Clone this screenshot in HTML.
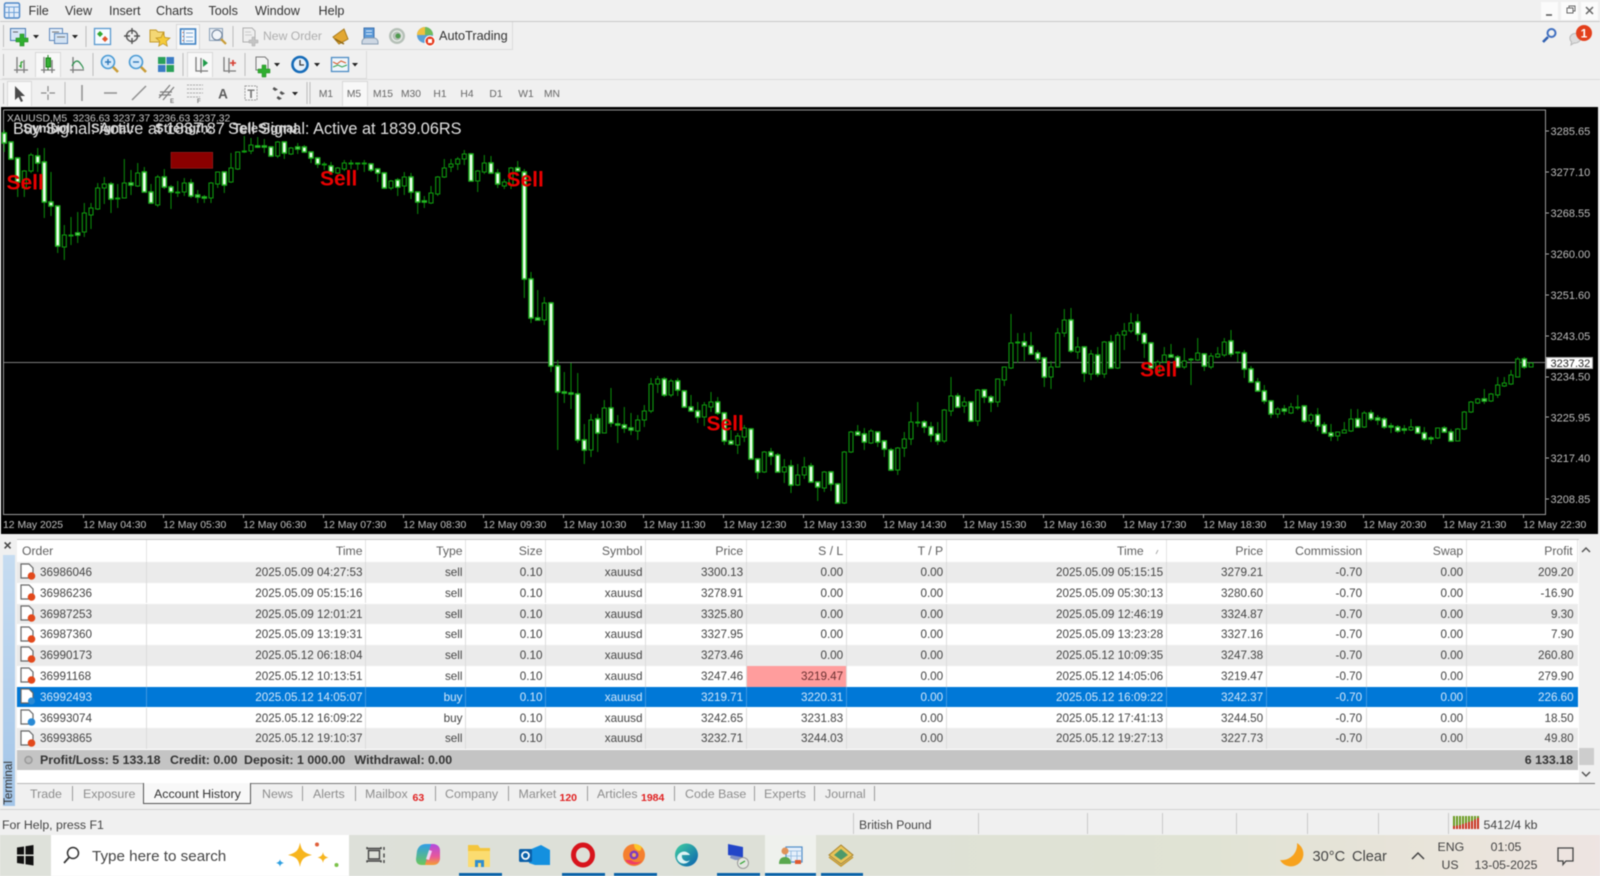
<!DOCTYPE html>
<html><head><meta charset="utf-8"><title>MetaTrader</title>
<style>
html,body{margin:0;padding:0;background:#f0f0f0}
#w{position:relative;width:1600px;height:876px;overflow:hidden;background:#f0f0f0;font-family:"Liberation Sans",Arial,sans-serif;filter:blur(.6px)}
.b{position:absolute}
.t{position:absolute;white-space:nowrap;line-height:0}
.m{font-size:12.6px;color:#333;top:10.5px}
.r{position:absolute;left:17px;width:1560.7px;height:20.8px;display:flex;line-height:22.4px;font-size:11.7px;color:#444;background:#fff;overflow:hidden}
.r.o{background:#ebebeb}
.r.s{background:#0078d7;color:#d2e6f9}
.r div{box-sizing:border-box;text-align:right;padding-right:2.5px;border-right:1px solid #dcdcdc;white-space:nowrap;flex:none}
.r.s div{border-right-color:#3f97e0}
.r div:nth-child(1){width:130px;text-align:left;padding-left:23px}
.r div:nth-child(2){width:219px}.r div:nth-child(3){width:100px}.r div:nth-child(4){width:80px}
.r div:nth-child(5){width:100px}.r div:nth-child(6){width:100.7px}.r div:nth-child(7){width:100px}
.r div:nth-child(8){width:100px}.r div:nth-child(9){width:220px}.r div:nth-child(10){width:100px}
.r div:nth-child(11){width:100px;padding-right:3.5px}.r div:nth-child(12){width:100px}.r div:nth-child(13){width:111px;border-right:0;padding-right:4px}
.r.h{height:22px;line-height:23.6px;font-size:12.2px;color:#5f5f5f}
.r.h div{border-right:1px solid #e4e4e4}
.r.h div:nth-child(1){padding-left:5px}
.r.h div:nth-child(9){padding-right:22px}
.tab{font-size:12.4px;color:#8d8d8d;top:794px}
.sep{position:absolute;width:1px;background:#9a9a9a;top:786px;height:15px}
.bd{color:#333;font-weight:bold;font-size:12.4px;top:760px}
.ss{position:absolute;width:1px;background:#c8c8c8;top:813px;height:21px}
.c{color:#e02020;font-weight:bold;font-size:10.5px;top:798px}
</style></head><body><div id="w">

<!-- menu -->
<div class="b" style="left:0;top:21px;width:1600px;height:1px;background:#c9c9c9"></div>
<span class="t m" style="left:28.5px">File</span><span class="t m" style="left:65px">View</span><span class="t m" style="left:109px">Insert</span><span class="t m" style="left:156px">Charts</span><span class="t m" style="left:208.5px">Tools</span><span class="t m" style="left:255px">Window</span><span class="t m" style="left:318.5px">Help</span>

<!-- toolbars -->
<div class="b" style="left:2px;top:22px;width:510px;height:27px;border:1px solid #dcdcdc;border-left:0;border-top:0"></div>
<div class="b" style="left:2px;top:51px;width:364px;height:27px;border:1px solid #dcdcdc;border-left:0;border-top:0"></div>
<div class="b" style="left:0;top:79px;width:1600px;height:1px;background:#dcdcdc"></div>
<div class="b" style="left:176px;top:24px;width:24px;height:25px;background:#f8f8f8;border:1px solid #d8d8d8;border-bottom:0;box-sizing:border-box"></div>
<div class="b" style="left:35px;top:52px;width:26px;height:25px;background:#f8f8f8;border:1px solid #d8d8d8;border-bottom:0;box-sizing:border-box"></div>
<div class="b" style="left:187px;top:52px;width:26px;height:25px;background:#f8f8f8;border:1px solid #d8d8d8;border-bottom:0;box-sizing:border-box"></div>
<div class="b" style="left:7px;top:81px;width:25px;height:25px;background:#f8f8f8;border:1px solid #d8d8d8;border-bottom:0;box-sizing:border-box"></div>
<div class="b" style="left:342px;top:81px;width:26px;height:25px;background:#f8f8f8;border:1px solid #d8d8d8;border-bottom:0;box-sizing:border-box"></div>
<span class="t" style="left:263px;top:36px;font-size:12.2px;color:#aeaeae">New Order</span>
<span class="t" style="left:439px;top:36px;font-size:12.7px;color:#333">AutoTrading</span>

<!-- window buttons -->
<div class="b" style="left:1541px;top:2px;width:17px;height:18px;background:#fbfbfb"></div>
<div class="b" style="left:1561px;top:2px;width:17px;height:18px;background:#fbfbfb"></div>
<div class="b" style="left:1581px;top:2px;width:17px;height:18px;background:#fbfbfb"></div>

<!-- table -->
<div class="b" style="left:17px;top:539px;width:1562px;height:244px;background:#fff;border-top:1px solid #c8c8c8;box-sizing:border-box"></div>
<div class="r h" style="top:540px"><div>Order</div><div>Time</div><div>Type</div><div>Size</div><div>Symbol</div><div>Price</div><div>S / L</div><div>T / P</div><div>Time</div><div>Price</div><div>Commission</div><div>Swap</div><div>Profit</div></div>
<div class="r o" style="top:561.9px"><div>36986046</div><div>2025.05.09 04:27:53</div><div>sell</div><div>0.10</div><div>xauusd</div><div>3300.13</div><div>0.00</div><div>0.00</div><div>2025.05.09 05:15:15</div><div>3279.21</div><div>-0.70</div><div>0.00</div><div>209.20</div></div>
<div class="r" style="top:582.7px"><div>36986236</div><div>2025.05.09 05:15:16</div><div>sell</div><div>0.10</div><div>xauusd</div><div>3278.91</div><div>0.00</div><div>0.00</div><div>2025.05.09 05:30:13</div><div>3280.60</div><div>-0.70</div><div>0.00</div><div>-16.90</div></div>
<div class="r o" style="top:603.5px"><div>36987253</div><div>2025.05.09 12:01:21</div><div>sell</div><div>0.10</div><div>xauusd</div><div>3325.80</div><div>0.00</div><div>0.00</div><div>2025.05.09 12:46:19</div><div>3324.87</div><div>-0.70</div><div>0.00</div><div>9.30</div></div>
<div class="r" style="top:624.3px"><div>36987360</div><div>2025.05.09 13:19:31</div><div>sell</div><div>0.10</div><div>xauusd</div><div>3327.95</div><div>0.00</div><div>0.00</div><div>2025.05.09 13:23:28</div><div>3327.16</div><div>-0.70</div><div>0.00</div><div>7.90</div></div>
<div class="r o" style="top:645.1px"><div>36990173</div><div>2025.05.12 06:18:04</div><div>sell</div><div>0.10</div><div>xauusd</div><div>3273.46</div><div>0.00</div><div>0.00</div><div>2025.05.12 10:09:35</div><div>3247.38</div><div>-0.70</div><div>0.00</div><div>260.80</div></div>
<div class="r" style="top:665.9px"><div>36991168</div><div>2025.05.12 10:13:51</div><div>sell</div><div>0.10</div><div>xauusd</div><div>3247.46</div><div style="background:#ff9d9d;color:#6a3030">3219.47</div><div>0.00</div><div>2025.05.12 14:05:06</div><div>3219.47</div><div>-0.70</div><div>0.00</div><div>279.90</div></div>
<div class="r s" style="top:686.7px"><div>36992493</div><div>2025.05.12 14:05:07</div><div>buy</div><div>0.10</div><div>xauusd</div><div>3219.71</div><div>3220.31</div><div>0.00</div><div>2025.05.12 16:09:22</div><div>3242.37</div><div>-0.70</div><div>0.00</div><div>226.60</div></div>
<div class="r" style="top:707.5px"><div>36993074</div><div>2025.05.12 16:09:22</div><div>buy</div><div>0.10</div><div>xauusd</div><div>3242.65</div><div>3231.83</div><div>0.00</div><div>2025.05.12 17:41:13</div><div>3244.50</div><div>-0.70</div><div>0.00</div><div>18.50</div></div>
<div class="r o" style="top:728.3px"><div>36993865</div><div>2025.05.12 19:10:37</div><div>sell</div><div>0.10</div><div>xauusd</div><div>3232.71</div><div>3244.03</div><div>0.00</div><div>2025.05.12 19:27:13</div><div>3227.73</div><div>-0.70</div><div>0.00</div><div>49.80</div></div>
<div class="b" style="left:17px;top:749.7px;width:1561px;height:20.3px;background:#c4c4c4"></div>
<span class="t bd" style="left:40px">Profit/Loss: 5 133.18</span><span class="t bd" style="left:170px">Credit: 0.00</span><span class="t bd" style="left:244px">Deposit: 1 000.00</span><span class="t bd" style="left:354.5px">Withdrawal: 0.00</span>
<span class="t bd" style="right:27px">6 133.18</span>

<!-- left strip -->
<div class="b" style="left:3px;top:555px;width:12px;height:251px;background:linear-gradient(#c6dcf1,#a3c5e8)"></div>
<span class="t" style="left:3.5px;top:545px;font-size:14px;font-weight:bold;color:#444">×</span>
<span class="t" style="left:9px;top:782.5px;font-size:11.6px;color:#333;transform:translateX(-50%) rotate(-90deg)">Terminal</span>

<!-- scrollbar -->
<div class="b" style="left:1579px;top:748px;width:15px;height:17px;background:#cdcdcd"></div>

<!-- tabs -->
<div class="b" style="left:17px;top:783px;width:126px;height:1px;background:#b8b8b8"></div>
<div class="b" style="left:250px;top:783px;width:1345px;height:1px;background:#777"></div>
<div class="b" style="left:143px;top:783px;width:108px;height:21px;background:#f8f8f8;border:1.5px solid #555;border-top:0;box-sizing:border-box"></div>
<span class="t tab" style="left:30px">Trade</span><div class="sep" style="left:72px"></div>
<span class="t tab" style="left:83px">Exposure</span>
<span class="t tab" style="left:154px;color:#333">Account History</span>
<span class="t tab" style="left:262px">News</span><div class="sep" style="left:302px"></div>
<span class="t tab" style="left:313px">Alerts</span><div class="sep" style="left:355px"></div>
<span class="t tab" style="left:365px">Mailbox</span><span class="t c" style="left:412.5px">63</span><div class="sep" style="left:435px"></div>
<span class="t tab" style="left:445px">Company</span><div class="sep" style="left:508px"></div>
<span class="t tab" style="left:518.5px">Market</span><span class="t c" style="left:559.5px">120</span><div class="sep" style="left:587px"></div>
<span class="t tab" style="left:597px">Articles</span><span class="t c" style="left:641px">1984</span><div class="sep" style="left:674px"></div>
<span class="t tab" style="left:685px">Code Base</span><div class="sep" style="left:754px"></div>
<span class="t tab" style="left:764px">Experts</span><div class="sep" style="left:814px"></div>
<span class="t tab" style="left:825px">Journal</span><div class="sep" style="left:874px"></div>
<div class="b" style="left:0;top:808.5px;width:1600px;height:1px;background:#d2d2d2"></div>

<!-- status -->
<span class="t" style="left:2px;top:825px;font-size:12.3px;color:#444">For Help, press F1</span>
<div class="ss" style="left:853px"></div><div class="ss" style="left:978px"></div><div class="ss" style="left:1087px"></div><div class="ss" style="left:1162px"></div><div class="ss" style="left:1236px"></div><div class="ss" style="left:1307px"></div><div class="ss" style="left:1378px"></div><div class="ss" style="left:1448px"></div>
<span class="t" style="left:859px;top:825px;font-size:12.2px;color:#444">British Pound</span>
<span class="t" style="left:1483.5px;top:825px;font-size:12.3px;color:#444">5412/4 kb</span>

<!-- taskbar -->
<div class="b" style="left:0;top:835px;width:1600px;height:41px;background:linear-gradient(90deg,#dee1da 0,#dde0d8 40%,#e0e3d4 75%,#eae4db 92%,#eee4e2 100%)"></div>
<div class="b" style="left:51px;top:835px;width:298px;height:41px;background:#fff"></div>
<div class="b" style="left:765px;top:835px;width:51px;height:41px;background:#eff1ed"></div>
<div class="b" style="left:459px;top:873px;width:43px;height:3px;background:#0a63a8"></div>
<div class="b" style="left:562px;top:873px;width:43px;height:3px;background:#0a63a8"></div>
<div class="b" style="left:614px;top:873px;width:43px;height:3px;background:#0a63a8"></div>
<div class="b" style="left:717px;top:873px;width:43px;height:3px;background:#0a63a8"></div>
<div class="b" style="left:765px;top:873px;width:51px;height:3px;background:#0a63a8"></div>
<div class="b" style="left:821px;top:873px;width:42px;height:3px;background:#0a63a8"></div>
<span class="t" style="left:92px;top:857px;font-size:15.2px;color:#444">Type here to search</span>
<span class="t" style="left:1312.5px;top:857px;font-size:14.6px;color:#444">30°C</span>
<span class="t" style="left:1352px;top:857px;font-size:14.6px;color:#444">Clear</span>
<span class="t" style="left:1437.5px;top:846.5px;font-size:12.3px;color:#444">ENG</span>
<span class="t" style="left:1441.5px;top:865px;font-size:12.3px;color:#444">US</span>
<span class="t" style="left:1506px;top:846.5px;font-size:12.3px;color:#444;transform:translateX(-50%)">01:05</span>
<span class="t" style="left:1506px;top:865px;font-size:12.3px;color:#444;transform:translateX(-50%)">13-05-2025</span>

<!-- graphics -->
<svg class="b" style="left:0;top:0" width="1600" height="876" viewBox="0 0 1600 876" xmlns="http://www.w3.org/2000/svg" font-family="Liberation Sans, Arial, sans-serif">
<defs>
<g id="d"><path d="M21 -8H29L33 -4V6H21Z" fill="#fff" stroke="#666" stroke-width="1.2"/></g>
<linearGradient id="cl" x1="0" y1="0" x2="0" y2="1"><stop offset="0" stop-color="#2f9ee8"/><stop offset="1" stop-color="#6cc85a"/></linearGradient>
<linearGradient id="cr" x1="0" y1="0" x2="0" y2="1"><stop offset="0" stop-color="#b04ae0"/><stop offset=".6" stop-color="#e8589a"/><stop offset="1" stop-color="#f5a030"/></linearGradient>
<linearGradient id="ed" x1="0" y1="0" x2="1" y2="1"><stop offset="0" stop-color="#3fd0a0"/><stop offset="1" stop-color="#0a5fb0"/></linearGradient>
</defs>

<!-- app icon -->
<rect x="4.500" y="3" width="15" height="15" rx="1.500" fill="#e4eefa" stroke="#4d86c6" stroke-width="1.400"/><path d="M4.500 7H19.500M9 7V18M14 7V18M4.500 12.500H19.500" stroke="#6c9fd6" stroke-width="1"/>

<!-- window glyphs -->
<path d="M1546 15H1552" stroke="#555" stroke-width="1.500"/><path d="M1567 8H1573V13H1567ZM1569 8V6H1575V11H1573" fill="none" stroke="#666"/><path d="M1586 7L1593 14M1593 7L1586 14" stroke="#666" stroke-width="1.500"/>
<!-- search and badge -->
<circle cx="1551.500" cy="33" r="4" fill="none" stroke="#3f6fc0" stroke-width="2"/><path d="M1548 37L1543 42" stroke="#2f5fb0" stroke-width="2.600"/>
<path d="M1570 37a6 6 0 0 1 11 0a6 6 0 0 1-7 6l-3 2l.5-3a6 6 0 0 1-1.500-5z" fill="#ddd" stroke="#b8b8b8"/>
<circle cx="1584" cy="33" r="8" fill="#e33f1b"/><text x="1584" y="37.500" text-anchor="middle" font-size="12" font-weight="bold" fill="#fff">1</text>

<!-- toolbar grips and dividers -->
<path d="M3.500 25V47M3.500 54V76M3.500 83V104M86 26V47M233 26V47M93 53V76M183 53V76M245 53V76M65 82V104M307 82V104M310 82V104" stroke="#bdbdbd" fill="none"/>

<!-- toolbar 1 -->
<rect x="10.500" y="28.500" width="15" height="12" fill="#d5e4f5" stroke="#4b7cb4"/><path d="M13 32H18" stroke="#666"/><path d="M20 34h4v4h4v4h-4v4h-4v-4h-4v-4h4z" fill="#2fae2f" stroke="#1d861d" stroke-width=".6"/>
<path d="M33 35h6l-3 3.500z" fill="#222"/>
<rect x="49.500" y="28.500" width="13" height="12" fill="#e3edf8" stroke="#5d88bb"/><rect x="54.500" y="33.500" width="13" height="10" fill="#d2e2f3" stroke="#5d88bb"/><path d="M52 32H59M57 37H65" stroke="#777"/>
<path d="M72 35h6l-3 3.500z" fill="#222"/>
<rect x="94.500" y="28.500" width="16" height="16" fill="#f7fbff" stroke="#5a9ad0" stroke-width="1.300"/><path d="M100 31l3 3-3 3-3-3z" fill="#2fa82f"/><path d="M105 36l3 3-3 3-3-3z" fill="#e2562a"/>
<circle cx="132" cy="36" r="5.500" fill="none" stroke="#5e5e5e" stroke-width="1.500"/><path d="M132 28V34M132 38V44M124 36H130M134 36H140" stroke="#555" stroke-width="1.400"/>
<path d="M150 30h6l2 2h6v10h-14z" fill="#f4d774" stroke="#c59b2e"/><path d="M163 33l2 4.500 5 .5-3.700 3.200 1 5-4.300-2.600-4.300 2.600 1-5-3.700-3.200 5-.5z" fill="#f5cb3a" stroke="#b98e1f" stroke-width=".7"/>
<rect x="180.500" y="29" width="15" height="15" fill="#f5f9fd" stroke="#3f82c4" stroke-width="1.600"/><path d="M184 29V44M186 33H193M186 37H193M186 41H193" stroke="#7ca8d4"/><path d="M183 32v1M183 36v1M183 40v1" stroke="#d04a20"/>
<rect x="209.500" y="28.500" width="13" height="12" fill="#e8eef5" stroke="#8aa0b8"/><circle cx="217" cy="35" r="5" fill="#f1f5f9" stroke="#6c8099"/><path d="M221 39l5 5" stroke="#c89b35" stroke-width="2.200"/>
<path d="M243 28h9l3 3v11h-12z" fill="#eee" stroke="#b0b0b0"/><path d="M245 32h6M245 35h7" stroke="#ccc"/><path d="M252 37h3v3h3v3h-3v3h-3v-3h-3v-3h3z" fill="#c4c4c4" stroke="#aaa" stroke-width=".5"/>
<path d="M333 37l11-8 4 10-9 5z" fill="#e2a732" stroke="#a87a1c"/><path d="M335 39l9 5" stroke="#8f6715" stroke-width="1.500"/>
<path d="M364 28h10v10h-10z" fill="#5c9ad8" stroke="#3c70ae"/><path d="M366 31h6M366 34h6" stroke="#dceaf8"/><path d="M362 42a4 4 0 0 1 4-4h8a4 4 0 0 1 4 4v2h-16z" fill="#cdd7e3" stroke="#8a9fb5"/>
<circle cx="397" cy="36" r="8" fill="#b6c0b8"/><circle cx="397" cy="36" r="5" fill="none" stroke="#eef3ee"/><circle cx="398" cy="36" r="2.500" fill="#4e9a4e"/>
<circle cx="425" cy="35" r="8" fill="#5aa0d8"/><path d="M417 35a8 8 0 0 1 8-8v8z" fill="#f0c040"/><path d="M425 27a8 8 0 0 1 8 8h-8z" fill="#6fbb5a"/><circle cx="430" cy="41" r="5" fill="#e53b1e" stroke="#fff"/><rect x="428" y="39" width="4" height="4" fill="#fff"/>

<!-- toolbar 2 -->
<path d="M14 70H28M17 57V73M24 60V73" stroke="#7b7b7b" stroke-width="1.300" fill="none"/><path d="M21 62v6M19 66h2M21 62h2" stroke="#2aa02a" stroke-width="1.300"/>
<path d="M41 70H55M44 57V73M52 60V73" stroke="#7b7b7b" stroke-width="1.300" fill="none"/><rect x="46" y="58" width="4.500" height="9" fill="#35b035" stroke="#1a7f1a"/><path d="M48 55v3M48 67v3" stroke="#1a7f1a"/>
<path d="M70 70H84M73 57V73" stroke="#7b7b7b" stroke-width="1.300" fill="none"/><path d="M72 66q4-8 8-3t3 6" stroke="#2e8f4e" stroke-width="1.300" fill="none"/>
<circle cx="108" cy="62" r="6.500" fill="#d7eafa" stroke="#4a9ad4" stroke-width="1.600"/><path d="M105 62h6M108 59v6" stroke="#2e78b8" stroke-width="1.400"/><path d="M113 67l5 5" stroke="#c89b35" stroke-width="2.600"/>
<circle cx="136" cy="62" r="6.500" fill="#d7eafa" stroke="#4a9ad4" stroke-width="1.600"/><path d="M133 62h6" stroke="#2e78b8" stroke-width="1.400"/><path d="M141 67l5 5" stroke="#c89b35" stroke-width="2.600"/>
<rect x="158" y="57" width="7.500" height="7" fill="#2aa05a"/><rect x="166.500" y="57" width="7.500" height="7" fill="#3a7cc4"/><rect x="158" y="65" width="7.500" height="7" fill="#3a7cc4"/><rect x="166.500" y="65" width="7.500" height="7" fill="#2aa05a"/>
<path d="M196 57V71H208M201 73V58" stroke="#7b7b7b" stroke-width="1.300" fill="none"/><path d="M203 59l5 4-5 4z" fill="#1f9a4a"/>
<path d="M224 57V71H236M229 73V58" stroke="#7b7b7b" stroke-width="1.300" fill="none"/><path d="M233 60v6M230 63h6" stroke="#d63d30" stroke-width="1.600"/>
<path d="M256 57h9l3 3v10h-12z" fill="#f3f3f3" stroke="#787878"/><path d="M262 65h4v4h4v4h-4v4h-4v-4h-4v-4h4z" fill="#2fae2f" stroke="#1d861d" stroke-width=".5"/><path d="M274 63h6l-3 3.500z" fill="#222"/>
<circle cx="300" cy="64.500" r="7.500" fill="#e6f1fb" stroke="#156bb8" stroke-width="2.600"/><path d="M300 60v5h4" stroke="#3b3b3b" stroke-width="1.300" fill="none"/><path d="M314 63h6l-3 3.500z" fill="#222"/>
<rect x="331.500" y="57.500" width="17" height="14" fill="#eef5fb" stroke="#4c8cc4" stroke-width="1.300"/><path d="M333 62l4 2 4-3 5 2" stroke="#d85a2a" fill="none"/><path d="M333 67l5-2 4 2 5-2" stroke="#2fa24f" fill="none"/><path d="M352 63h6l-3 3.500z" fill="#222"/>

<!-- toolbar 3 -->
<path d="M15 86V100l3.500-3 2.500 5 2-1-2.500-5H25z" fill="#4a4a4a"/>
<path d="M48 86V91.500M48 94.500V100M41 93H46.500M49.500 93H55" stroke="#8a8a8a" stroke-width="1.200"/>
<path d="M82 85V101" stroke="#909090" stroke-width="1.500"/>
<path d="M104 93H117" stroke="#909090" stroke-width="1.500"/>
<path d="M132 100L146 86" stroke="#909090" stroke-width="1.500"/>
<path d="M159 98L170 85M163 100L174 87M160 92h12M159 95h12" stroke="#7d7d7d" stroke-width="1.200" fill="none"/><text x="170" y="103" font-size="6" font-weight="bold" fill="#777">E</text>
<path d="M187 85H203M187 89H203M187 93H203M187 97H200" stroke="#a8a8a8" stroke-dasharray="2 1" fill="none"/><text x="197" y="103" font-size="6" font-weight="bold" fill="#777">F</text>
<text x="223" y="98.500" text-anchor="middle" font-size="13.500" font-weight="bold" fill="#5c5c5c">A</text>
<rect x="245" y="86" width="12" height="14" fill="#f6f6f6" stroke="#999" stroke-dasharray="2 1"/><text x="251" y="98" text-anchor="middle" font-size="12" font-weight="bold" fill="#777">T</text>
<path d="M274 87l4 2.500-3 1.500-2.500-2zM281 91l4 2.500-3 1.500-2.500-2zM278 96l4 2.500-3 1.500-2.500-2z" fill="#555"/><path d="M292 92h6l-3 3.500z" fill="#222"/>
<g font-size="10.300" fill="#666" text-anchor="middle"><text x="326" y="97">M1</text><text x="354" y="97">M5</text><text x="383" y="97">M15</text><text x="411" y="97">M30</text><text x="440" y="97">H1</text><text x="467" y="97">H4</text><text x="496" y="97">D1</text><text x="526" y="97">W1</text><text x="552" y="97">MN</text></g>

<!-- chart -->
<rect x="1" y="107" width="1597" height="427" fill="#000"/>
<path d="M3.500 110V514.500H1545.500V110H3.500" fill="none" stroke="#9a9a9a"/>
<path d="M4 362.500H1545" stroke="#7c7c7c"/>
<path fill="none" stroke="#0a8f0a" stroke-width="1" d="M4.300 130V152M11 142V160M17.700 157V197M24.300 170V197M31 153V173M37.700 148V172M44.300 148V218M51 172V216M57.700 206V253M64.300 225V260M71 217V245M77.700 212V243M84.300 203V237M91 203V229M97.700 183V210M104.300 177V204M111 182V213M117.700 184V208M124.300 159V198M131 170V195M137.700 163V187M144.300 167V192M151 184V204M157.700 175V207M164.300 169V189M171 185V209M177.700 181V197M184.300 178V196M191 179V198M197.700 190V203M204.300 195V203M211 182V203M217.700 172V188M224.300 172V193M231 153V183M237.700 152V170M244.300 136V153M251 138V154M257.700 137V148M264.300 139V153M271 146V157M277.700 141V158M284.300 142V159M291 147V155M297.700 143V154M304.300 145V153M311 152V163M317.700 157V168M324.300 162V170M331 162V173M337.700 167V174M344.300 160V171M351 160V169M357.700 163V170M364.300 160V172M371 163V172M377.700 168V182M384.300 172V189M391 180V190M397.700 178V196M404.300 172V195M411 173V199M417.700 192V214M424.300 196V208M431 186V204M437.700 176V196M444.300 159V178M451 159V172M457.700 157V170M464.300 150V165M471 153V181M477.700 170V192M484.300 155V174M491 156V174M497.700 169V188M504.300 179V189M511 167V189M517.700 161V172M524.300 169V298M531 272V323M537.700 290V320M544.300 297V325M551 302V372M557.700 360V450M564.300 372V403M571 363V409M577.700 373V443M584.300 424V464M591 414V457M597.700 414V452M604.300 400V433M611 388V427M617.700 415V443M624.300 407V433M631 413V435M637.700 415V440M644.300 405V427M651 378V413M657.700 376V393M664.300 377V397M671 379V397M677.700 378V396M684.300 390V408M691 395V412M697.700 402V423M704.300 402V426M711 392V412M717.700 397V415M724.300 412V445M731 430V445M737.700 433V454M744.300 425V442M751 428V459M757.700 458V479M764.300 451V473M771 448V465M777.700 453V472M784.300 459V483M791 460V493M797.700 464V486M804.300 457V479M811 463V483M817.700 482V501M824.300 471V492M831 471V491M837.700 483V504M844.300 451V504M851 431V453M857.700 425V435M864.300 428V450M871 429V444M877.700 432V447M884.300 440V457M891 448V471M897.700 447V475M904.300 432V457M911 412V445M917.700 402V427M924.300 420V433M931 422V442M937.700 422V445M944.300 409V443M951 377V416M957.700 393V408M964.300 397V413M971 402V422M977.700 389V426M984.300 389V403M991 395V412M997.700 379V407M1004.300 367V386M1011 314V369M1017.700 333V363M1024.300 333V361M1031 332V355M1037.700 350V363M1044.300 357V387M1051 361V389M1057.700 328V367M1064.300 309V337M1071 308V353M1077.700 337V359M1084.300 346V382M1091 350V380M1097.700 347V377M1104.300 341V378M1111 335V369M1117.700 332V369M1124.300 323V350M1131 313V333M1137.700 314V341M1144.300 332V358M1151 342V370M1157.700 360V375M1164.300 347V363M1171 344V357M1177.700 355V368M1184.300 348V369M1191 358V385M1197.700 338V361M1204.300 353V371M1211 353V369M1217.700 347V358M1224.300 338V357M1231 330V357M1237.700 352V362M1244.300 350V378M1251 366V383M1257.700 378V392M1264.300 385V404M1271 400V418M1277.700 407V418M1284.300 405V415M1291 403V414M1297.700 395V410M1304.300 405V423M1311 413V424M1317.700 408V431M1324.300 422V434M1331 424V441M1337.700 432V441M1344.300 422V433M1351 409V432M1357.700 409V428M1364.300 411V428M1371 410V421M1377.700 415V425M1384.300 417V429M1391 423V433M1397.700 425V433M1404.300 425V434M1411 419V431M1417.700 426V434M1424.300 427V441M1431 436V444M1437.700 428V439M1444.300 426V433M1451 429V442M1457.700 428V441M1464.300 411V430M1471 401V413M1477.700 398V404M1484.300 389V404M1491 393V402M1497.700 377V398M1504.300 377V387M1511 370V385M1517.700 357V377M1524.300 357V369M1531 363V367"/>
<path fill="#000" stroke="#0f9c0f" stroke-width="1.100" d="M24.300 171h2V188h-4V171zM31 155h2V171h-4V155zM64.300 235h2V247h-4V235zM71 235h2V236h-4V235zM84.300 213h2V232h-4V213zM91 208h2V215h-4V208zM97.700 188h2V209h-4V188zM104.300 184h2V188h-4V184zM117.700 198h2V199h-4V198zM124.300 183h2V198h-4V183zM137.700 173h2V186h-4V173zM157.700 177h2V205h-4V177zM177.700 192h2V193h-4V192zM184.300 183h2V192h-4V183zM211 183h2V198h-4V183zM217.700 172h2V184h-4V172zM231 168h2V182h-4V168zM237.700 152h2V169h-4V152zM244.300 151h2V152h-4V151zM251 145h2V151h-4V145zM277.700 142h2V156h-4V142zM291 148h2V154h-4V148zM324.300 164h2V165h-4V164zM337.700 168h2V173h-4V168zM344.300 163h2V169h-4V163zM351 163h2V164h-4V163zM357.700 163h2V164h-4V163zM364.300 163h2V164h-4V163zM391 181h2V188h-4V181zM404.300 177h2V186h-4V177zM431 193h2V203h-4V193zM437.700 177h2V194h-4V177zM444.300 168h2V177h-4V168zM451 164h2V167h-4V164zM457.700 159h2V164h-4V159zM464.300 154h2V159h-4V154zM477.700 171h2V181h-4V171zM484.300 163h2V172h-4V163zM504.300 182h2V186h-4V182zM511 168h2V185h-4V168zM544.300 303h2V320h-4V303zM591 420h2V450h-4V420zM604.300 408h2V433h-4V408zM637.700 420h2V431h-4V420zM644.300 411h2V420h-4V411zM651 384h2V411h-4V384zM657.700 379h2V384h-4V379zM671 381h2V395h-4V381zM704.300 405h2V417h-4V405zM711 402h2V407h-4V402zM737.700 436h2V445h-4V436zM744.300 428h2V437h-4V428zM764.300 452h2V472h-4V452zM784.300 467h2V472h-4V467zM797.700 475h2V485h-4V475zM804.300 467h2V475h-4V467zM824.300 472h2V488h-4V472zM844.300 452h2V503h-4V452zM851 432h2V452h-4V432zM871 431h2V443h-4V431zM897.700 448h2V470h-4V448zM904.300 439h2V448h-4V439zM911 422h2V439h-4V422zM917.700 422h2V423h-4V422zM944.300 410h2V441h-4V410zM951 396h2V411h-4V396zM964.300 402h2V406h-4V402zM977.700 390h2V421h-4V390zM997.700 379h2V402h-4V379zM1004.300 367h2V380h-4V367zM1011 343h2V368h-4V343zM1017.700 342h2V343h-4V342zM1051 367h2V377h-4V367zM1057.700 333h2V367h-4V333zM1064.300 320h2V333h-4V320zM1077.700 347h2V352h-4V347zM1091 354h2V374h-4V354zM1104.300 342h2V374h-4V342zM1117.700 335h2V368h-4V335zM1124.300 331h2V335h-4V331zM1131 323h2V331h-4V323zM1157.700 362h2V372h-4V362zM1164.300 355h2V362h-4V355zM1184.300 361h2V367h-4V361zM1191 359h2V360h-4V359zM1197.700 353h2V360h-4V353zM1211 356h2V367h-4V356zM1217.700 354h2V357h-4V354zM1224.300 342h2V355h-4V342zM1237.700 352h2V353h-4V352zM1277.700 409h2V414h-4V409zM1291 407h2V413h-4V407zM1297.700 407h2V408h-4V407zM1311 415h2V421h-4V415zM1337.700 432h2V436h-4V432zM1344.300 430h2V433h-4V430zM1351 419h2V431h-4V419zM1364.300 413h2V427h-4V413zM1411 427h2V430h-4V427zM1437.700 428h2V438h-4V428zM1457.700 429h2V441h-4V429zM1464.300 412h2V429h-4V412zM1471 402h2V412h-4V402zM1477.700 399h2V403h-4V399zM1491 394h2V401h-4V394zM1497.700 385h2V395h-4V385zM1504.300 383h2V386h-4V383zM1511 375h2V384h-4V375zM1517.700 359h2V377h-4V359zM1531 363h2V367h-4V363z"/>
<path fill="#f2fff2" stroke="#22b822" stroke-width="1.500" d="M4.300 133h2V143h-4V133zM11 142h2V159h-4V142zM17.700 158h2V182h-4V158zM37.700 156h2V163h-4V156zM44.300 162h2V202h-4V162zM51 202h2V206h-4V202zM57.700 206h2V246h-4V206zM77.700 233h2V235h-4V233zM111 184h2V199h-4V184zM131 183h2V185h-4V183zM144.300 172h2V192h-4V172zM151 192h2V203h-4V192zM164.300 177h2V187h-4V177zM171 187h2V192h-4V187zM191 183h2V196h-4V183zM197.700 195h2V197h-4V195zM204.300 197h2V198h-4V197zM224.300 172h2V185h-4V172zM257.700 146h2V147h-4V146zM264.300 146h2V147h-4V146zM271 147h2V156h-4V147zM284.300 142h2V153h-4V142zM297.700 147h2V149h-4V147zM304.300 147h2V152h-4V147zM311 152h2V158h-4V152zM317.700 158h2V164h-4V158zM331 166h2V172h-4V166zM371 164h2V170h-4V164zM377.700 169h2V173h-4V169zM384.300 173h2V188h-4V173zM397.700 180h2V187h-4V180zM411 177h2V192h-4V177zM417.700 192h2V202h-4V192zM424.300 201h2V202h-4V201zM471 154h2V181h-4V154zM491 163h2V173h-4V163zM497.700 173h2V184h-4V173zM517.700 168h2V171h-4V168zM524.300 172h2V279h-4V172zM531 279h2V318h-4V279zM537.700 318h2V320h-4V318zM551 303h2V366h-4V303zM557.700 366h2V392h-4V366zM564.300 392h2V393h-4V392zM571 393h2V394h-4V393zM577.700 394h2V440h-4V394zM584.300 440h2V450h-4V440zM597.700 419h2V433h-4V419zM611 408h2V423h-4V408zM617.700 424h2V425h-4V424zM624.300 425h2V428h-4V425zM631 428h2V430h-4V428zM664.300 379h2V395h-4V379zM677.700 381h2V390h-4V381zM684.300 391h2V407h-4V391zM691 407h2V411h-4V407zM697.700 411h2V417h-4V411zM717.700 402h2V413h-4V402zM724.300 413h2V441h-4V413zM731 441h2V444h-4V441zM751 429h2V459h-4V429zM757.700 459h2V472h-4V459zM771 452h2V456h-4V452zM777.700 455h2V472h-4V455zM791 466h2V485h-4V466zM811 466h2V482h-4V466zM817.700 482h2V487h-4V482zM831 472h2V484h-4V472zM837.700 484h2V503h-4V484zM857.700 432h2V435h-4V432zM864.300 434h2V442h-4V434zM877.700 432h2V442h-4V432zM884.300 441h2V449h-4V441zM891 450h2V470h-4V450zM924.300 422h2V427h-4V422zM931 427h2V435h-4V427zM937.700 434h2V441h-4V434zM957.700 396h2V407h-4V396zM971 402h2V421h-4V402zM984.300 390h2V397h-4V390zM991 397h2V402h-4V397zM1024.300 342h2V346h-4V342zM1031 346h2V354h-4V346zM1037.700 353h2V359h-4V353zM1044.300 358h2V377h-4V358zM1071 320h2V351h-4V320zM1084.300 347h2V373h-4V347zM1097.700 355h2V374h-4V355zM1111 342h2V368h-4V342zM1137.700 322h2V334h-4V322zM1144.300 334h2V343h-4V334zM1151 343h2V368h-4V343zM1171 355h2V357h-4V355zM1177.700 357h2V367h-4V357zM1204.300 354h2V366h-4V354zM1231 341h2V354h-4V341zM1244.300 353h2V369h-4V353zM1251 369h2V382h-4V369zM1257.700 382h2V391h-4V382zM1264.300 391h2V401h-4V391zM1271 401h2V414h-4V401zM1284.300 409h2V411h-4V409zM1304.300 406h2V421h-4V406zM1317.700 415h2V426h-4V415zM1324.300 425h2V433h-4V425zM1331 433h2V436h-4V433zM1357.700 419h2V427h-4V419zM1371 413h2V419h-4V413zM1377.700 418h2V420h-4V418zM1384.300 419h2V427h-4V419zM1391 426h2V427h-4V426zM1397.700 427h2V431h-4V427zM1404.300 429h2V430h-4V429zM1417.700 427h2V433h-4V427zM1424.300 433h2V439h-4V433zM1431 438h2V439h-4V438zM1444.300 428h2V432h-4V428zM1451 432h2V441h-4V432zM1484.300 399h2V401h-4V399zM1524.300 359h2V367h-4V359z"/>

<!-- chart text -->
<rect x="171" y="152.300" width="41.700" height="16" fill="#8b0000" stroke="#a02020" stroke-width=".6"/>
<g font-size="21" font-weight="bold" fill="#ea0000"><text x="6.500" y="189.500">Sell</text><text x="320" y="185.500">Sell</text><text x="506.500" y="186.500">Sell</text><text x="706.500" y="430.500">Sell</text><text x="1140" y="376.500">Sell</text></g>
<text x="7" y="121.500" font-size="10.300" fill="#c8c8c8">XAUUSD,M5&#160;&#160;3236.63 3237.37 3236.63 3237.32</text>
<g font-size="16.300" fill="#e0e0e0"><text x="13" y="134">Buy Signal: Active at 1837.87</text><text x="228" y="134">Sell Signal: Active at 1839.06RS</text></g>
<g font-size="13" font-weight="bold" fill="#d8d8d8"><text x="23" y="132.500">Symbol:</text><text x="91" y="132.500">Signal:</text><text x="155" y="132.500">Strength:</text><text x="233" y="132.500">TeleSignal</text></g>

<!-- axes -->
<path d="M1546 131H1549M1546 172H1549M1546 213H1549M1546 254H1549M1546 295H1549M1546 336H1549M1546 377H1549M1546 417H1549M1546 458H1549M1546 499H1549" stroke="#aaa"/>
<g font-size="11" fill="#bdbdbd"><text x="1550.500" y="135">3285.65</text><text x="1550.500" y="176">3277.10</text><text x="1550.500" y="217">3268.55</text><text x="1550.500" y="258">3260.00</text><text x="1550.500" y="299">3251.60</text><text x="1550.500" y="340">3243.05</text><text x="1550.500" y="380.500">3234.50</text><text x="1550.500" y="421.500">3225.95</text><text x="1550.500" y="462">3217.40</text><text x="1550.500" y="503">3208.85</text></g>
<rect x="1546.500" y="357.500" width="46" height="11" fill="#fff" stroke="#aaa"/><text x="1550.500" y="367" font-size="11" fill="#222">3237.32</text>
<path d="M83.500 514V518M163.500 514V518M243.500 514V518M323.500 514V518M403.500 514V518M483.500 514V518M563.500 514V518M643.500 514V518M723.500 514V518M803.500 514V518M883.500 514V518M963.500 514V518M1043.500 514V518M1123.500 514V518M1203.500 514V518M1283.500 514V518M1363.500 514V518M1443.500 514V518M1523.500 514V518" stroke="#aaa"/>
<g font-size="10.400" fill="#c0c0c0"><text x="3" y="528">12 May 2025</text><text x="83.300" y="528">12 May 04:30</text><text x="163.300" y="528">12 May 05:30</text><text x="243.300" y="528">12 May 06:30</text><text x="323.300" y="528">12 May 07:30</text><text x="403.300" y="528">12 May 08:30</text><text x="483.300" y="528">12 May 09:30</text><text x="563.300" y="528">12 May 10:30</text><text x="643.300" y="528">12 May 11:30</text><text x="723.300" y="528">12 May 12:30</text><text x="803.300" y="528">12 May 13:30</text><text x="883.300" y="528">12 May 14:30</text><text x="963.300" y="528">12 May 15:30</text><text x="1043.300" y="528">12 May 16:30</text><text x="1123.300" y="528">12 May 17:30</text><text x="1203.300" y="528">12 May 18:30</text><text x="1283.300" y="528">12 May 19:30</text><text x="1363.300" y="528">12 May 20:30</text><text x="1443.300" y="528">12 May 21:30</text><text x="1523.300" y="528">12 May 22:30</text></g>

<!-- sort glyph, scroll arrows -->
<path d="M1156 554l2-4" stroke="#aaa"/>
<path d="M1582 552l4-4 4 4" fill="none" stroke="#555" stroke-width="1.500"/><path d="M1582 772l4 4 4-4" fill="none" stroke="#555" stroke-width="1.500"/>

<!-- row icons -->
<use href="#d" y="572"/><circle cx="31.500" cy="576" r="3.800" fill="#e2491c"/>
<use href="#d" y="593"/><circle cx="31.500" cy="597" r="3.800" fill="#e2491c"/>
<use href="#d" y="614"/><circle cx="31.500" cy="618" r="3.800" fill="#e2491c"/>
<use href="#d" y="635"/><circle cx="31.500" cy="639" r="3.800" fill="#e2491c"/>
<use href="#d" y="655"/><circle cx="31.500" cy="659" r="3.800" fill="#e2491c"/>
<use href="#d" y="676"/><circle cx="31.500" cy="680" r="3.800" fill="#e2491c"/>
<use href="#d" y="697"/><circle cx="31.500" cy="701" r="3.500" fill="#2a8ad4"/>
<use href="#d" y="718"/><circle cx="31.500" cy="722" r="3.800" fill="#2a8ad4"/>
<use href="#d" y="739"/><circle cx="31.500" cy="743" r="3.800" fill="#e2491c"/>
<!-- total icon -->
<circle cx="28.500" cy="760" r="3.500" fill="#bbb" stroke="#999" stroke-width="1.500"/>

<!-- signal bars -->
<g stroke-width="2"><path d="M1454 816V826M1457 816V825.500M1460 816V825M1463 816V824M1466 816V823M1469 816V822M1472 816V821M1475 816V819.500M1478 816V818" stroke="#6a9a20"/><path d="M1454 826V829M1457 825.500V829M1460 825V829M1463 824V829M1466 823V829M1469 822V829M1472 821V829M1475 819.500V829M1478 818V829" stroke="#c8301c"/></g>

<!-- taskbar icons -->
<path d="M17 847.500l7-1V854.500h-7zM25.500 846.300l8-1.300V854.500h-8zM17 856h7v8l-7-1zM25.500 856h8v9.500l-8-1.300z" fill="#111"/>
<circle cx="73" cy="853" r="5.500" fill="none" stroke="#333" stroke-width="1.500"/><path d="M69 857.500L64 863" stroke="#333" stroke-width="1.700"/>
<path d="M300 842.500c1.500 8 3.500 10 12 12.500-8.500 2-10.500 4-12 12-1.500-8-3.500-10-12-12 8.500-2.500 10.500-4.500 12-12.500z" fill="#f7b51e"/>
<path d="M323 852c.5 3 1.500 4.500 5.500 5.500-4 1-5 2.500-5.500 5.500-.5-3-1.500-4.500-5.500-5.500 4-1 5-2.500 5.500-5.500z" fill="#f7b51e"/>
<path d="M280 859c.3 2 1 3 4 4-3 .8-3.700 1.800-4 4-.3-2.200-1-3.200-4-4 3-1 3.700-2 4-4z" fill="#2d9fe0"/>
<circle cx="317" cy="844.500" r="2" fill="#e0603a"/><circle cx="336.500" cy="865" r="2" fill="#7cc24a"/>
<path d="M367 847v1.500h14v-1.500M367 862.500V861h14v1.500M368.500 850.500h11v8.500h-11zM384 847v3M384 853.500v4M384 860v3" fill="none" stroke="#444" stroke-width="1.400"/>
<path d="M417 851q2-7 9-7h6l-5 21h-5q-6 0-6-6z" fill="url(#cl)"/><path d="M431 844h3q6 1 6 7v8q-1 6-7 6h-8z" fill="url(#cr)"/><path d="M429 850l3 1-3 9-3-1z" fill="#f4e8ff" opacity=".85"/>
<path d="M468 845h10l2 3h10v19h-22z" fill="#f4c63e"/><path d="M468 851h22v16h-22z" fill="#fbdc70"/><path d="M475 867v-7h9v7h-3v-4h-3v4z" fill="#2f8ed0"/>
<path d="M529 850l12-5 9 5v15h-15l-6-2z" fill="#1490df"/><rect x="519" y="849" width="13" height="13" rx="1.500" fill="#0a5fa8"/><circle cx="525.500" cy="855.500" r="3.500" fill="none" stroke="#fff" stroke-width="1.800"/>
<ellipse cx="583" cy="855" rx="9.500" ry="10" fill="none" stroke="#d8141c" stroke-width="5"/>
<circle cx="634" cy="855" r="11" fill="#f5802e"/><path d="M634 844c7 0 11 5 11 11 0-4-2-7-4-8 1 3-1 4-2 4-4-1-5-4-5-7z" fill="#fcc52a"/><path d="M625 860a11 11 0 0 0 17 1q-6 3-11-1z" fill="#ef3d66"/><circle cx="634" cy="855" r="4.500" fill="#7d3ac1"/><circle cx="634" cy="855" r="2" fill="#f2a65a"/>
<circle cx="686.500" cy="855" r="11.500" fill="url(#ed)"/><path d="M677 858a7 7 0 0 1 13-3h-8a5 5 0 0 0 8 5a7 7 0 0 1-13-2z" fill="#dff3f4"/>
<path d="M728 844l15 3v11l-15-3z" fill="#2346c8"/><path d="M731 855l10 2v3h-6l-5-2z" fill="#7f90c4"/><circle cx="743" cy="863" r="5.500" fill="#e3e6e0" stroke="#999"/><path d="M740 864l5-3" stroke="#2fa22f" stroke-width="1.300"/>
<rect x="786" y="847" width="16" height="15" fill="#e6f0fb" stroke="#4f8cc8" stroke-width="1.200"/><path d="M786 851h16M791 851v11M797 851v11M786 856h16" stroke="#8db6de" stroke-width=".8"/><circle cx="785" cy="851" r="3.500" fill="#e09258"/><path d="M779 864q0-7 6-7t6 7z" fill="#5aa84e"/><path d="M795 860h6v4h-6z" fill="#e05a30"/>
<path d="M829 855l12-10 12 10-12 9z" fill="#e9c45a" stroke="#a9842c"/><path d="M834 855l7-6 7 6-7 5z" fill="#4f9a6a"/><path d="M829 857l12 9 12-9" fill="none" stroke="#c69a2e" stroke-width="1.500"/>
<path d="M1297 843A12.500 12.500 0 1 1 1280 860C1290 861 1298 853 1297 843z" fill="#f7a21d"/>
<path d="M1412 859l6-6 6 6" fill="none" stroke="#444" stroke-width="1.500"/>
<path d="M1558 848h15v13h-7l-3 3.500V861h-5z" fill="none" stroke="#444" stroke-width="1.300"/>
</svg>
</div></body></html>
